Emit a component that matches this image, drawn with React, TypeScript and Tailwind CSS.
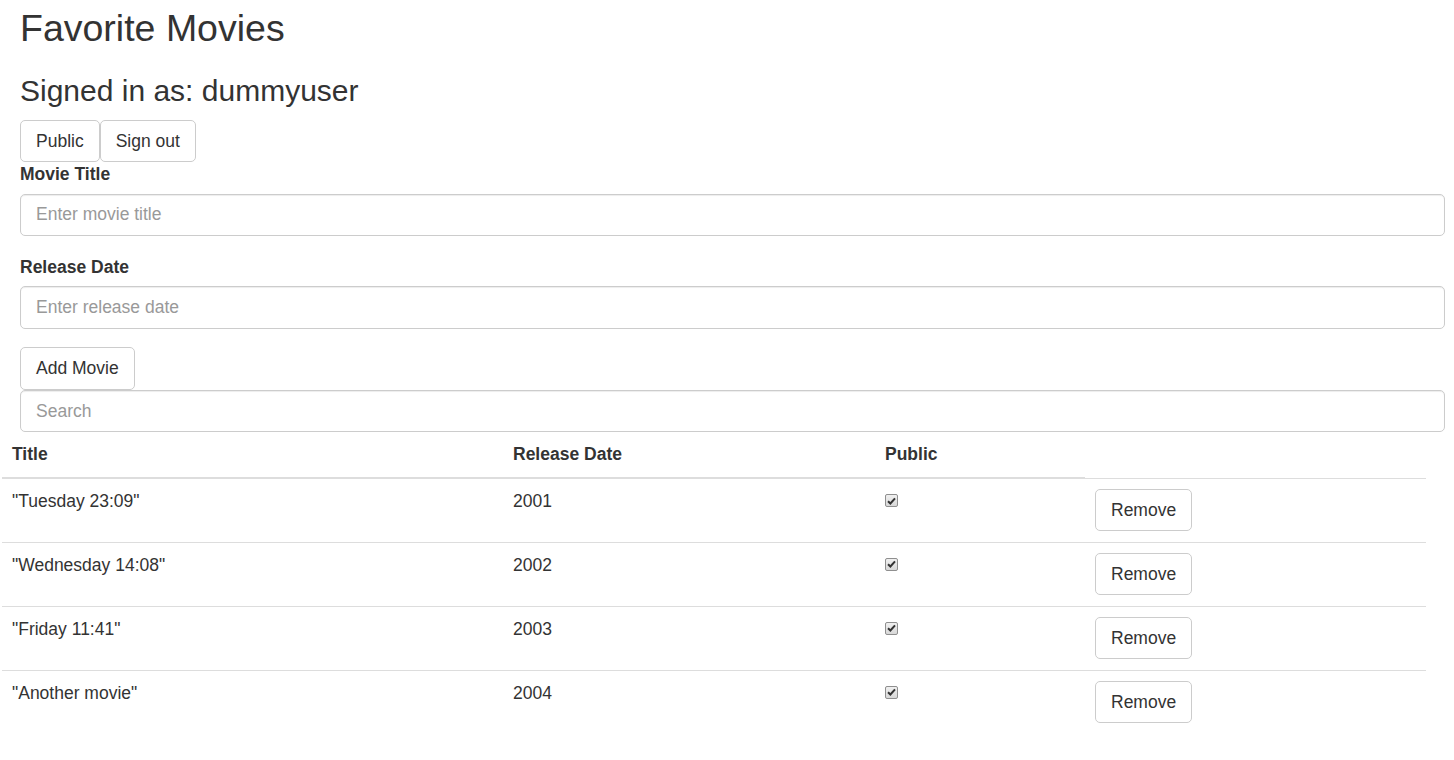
import React, { useState } from 'react';

type Movie = { id: number; title: string; date: string; isPublic: boolean };

const initialMovies: Movie[] = [
  { id: 1, title: '"Tuesday 23:09"', date: '2001', isPublic: true },
  { id: 2, title: '"Wednesday 14:08"', date: '2002', isPublic: true },
  { id: 3, title: '"Friday 11:41"', date: '2003', isPublic: true },
  { id: 4, title: '"Another movie"', date: '2004', isPublic: true },
];

const btn =
  'h-[42.5px] px-[15px] border border-[#ccc] rounded-[5px] bg-white text-[#333] text-[17.5px] leading-[25px]';
const input =
  'block w-full h-[42.5px] px-[15px] border border-[#ccc] rounded-[5px] text-[17.5px] text-[#555] placeholder:text-[#999] shadow-[inset_0_1px_1px_rgba(0,0,0,0.075)] outline-none';

const Check: React.FC<{ checked: boolean }> = ({ checked }) => (
  <span className="mt-[5px] flex h-[13px] w-[13px] items-center justify-center rounded-[2px] border border-[#8f8f8f] bg-gradient-to-b from-[#f0f0f0] to-[#d8d8d8]">
    {checked && (
      <svg width="9" height="8" viewBox="0 0 9 8">
        <path d="M1 4.2 L3.4 6.5 L8 1.3" fill="none" stroke="#333" strokeWidth="2" />
      </svg>
    )}
  </span>
);

const App: React.FC = () => {
  const [movies, setMovies] = useState<Movie[]>(initialMovies);
  const [title, setTitle] = useState('');
  const [date, setDate] = useState('');
  const [search, setSearch] = useState('');

  const addMovie = () => {
    if (title.trim()) {
      setMovies([...movies, { id: Date.now(), title: `"${title}"`, date, isPublic: true }]);
      setTitle('');
      setDate('');
    }
  };

  const removeMovie = (id: number) => setMovies(movies.filter(m => m.id !== id));

  const shown = movies.filter(m => m.title.toLowerCase().includes(search.toLowerCase()));

  return (
    <div className="min-h-screen bg-white pl-[20px] pr-[9px] pt-[8px] font-['Liberation_Sans',Arial,sans-serif] text-[17.5px] leading-[25px] text-[#333]">
      <h2 className="text-[37.5px] leading-[41.25px]">Favorite Movies</h2>
      <h3 className="mt-[25px] mb-[12.5px] text-[30px] leading-[33px]">Signed in as: dummyuser</h3>
      <div className="flex">
        <button className={btn}>Public</button>
        <button className={btn}>Sign out</button>
      </div>

      <div className="mb-[18.75px]">
        <label className="mb-[6.25px] block font-bold">Movie Title</label>
        <input
          className={input}
          placeholder="Enter movie title"
          value={title}
          onChange={e => setTitle(e.target.value)}
        />
      </div>
      <div className="mb-[18.75px]">
        <label className="mb-[6.25px] block font-bold">Release Date</label>
        <input
          className={input}
          placeholder="Enter release date"
          value={date}
          onChange={e => setDate(e.target.value)}
        />
      </div>
      <button className={btn} onClick={addMovie}>Add Movie</button>
      <input
        className={input}
        placeholder="Search"
        value={search}
        onChange={e => setSearch(e.target.value)}
      />

      <table className="ml-[-18px] w-[1424px] table-fixed">
        <colgroup>
          <col className="w-[501px]" />
          <col className="w-[372px]" />
          <col className="w-[210px]" />
          <col className="w-[341px]" />
        </colgroup>
        <thead>
          <tr>
            <th className="border-b-2 border-[#ddd] p-[10px] text-left font-bold">Title</th>
            <th className="border-b-2 border-[#ddd] p-[10px] text-left font-bold">Release Date</th>
            <th className="border-b-2 border-[#ddd] p-[10px] text-left font-bold">Public</th>
          </tr>
        </thead>
        <tbody>
          {shown.map(m => (
            <tr key={m.id} className="border-t border-b border-[#ddd] last:border-b-0">
              <td className="px-[10px] pt-[10px] pb-[10.5px] align-top">{m.title}</td>
              <td className="px-[10px] pt-[10px] pb-[10.5px] align-top">{m.date}</td>
              <td className="px-[10px] pt-[10px] pb-[10.5px] align-top">
                <Check checked={m.isPublic} />
              </td>
              <td className="px-[10px] pt-[10px] pb-[10.5px] align-top">
                <button className={btn} onClick={() => removeMovie(m.id)}>Remove</button>
              </td>
            </tr>
          ))}
        </tbody>
      </table>
    </div>
  );
};

export default App;
